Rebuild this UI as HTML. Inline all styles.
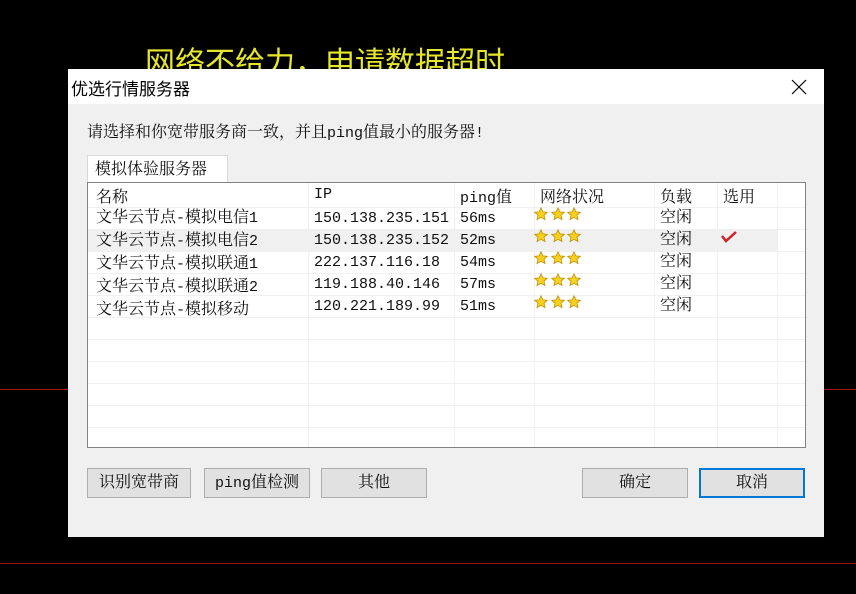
<!DOCTYPE html>
<html><head><meta charset="utf-8"><style>
*{margin:0;padding:0;box-sizing:border-box}
body{width:856px;height:594px;background:#000;position:relative;overflow:hidden;font-family:"Liberation Mono","Noto Serif CJK SC",monospace;color:#111}
.abs{position:absolute}
.red{position:absolute;height:1px;background:#a01010}
.yt{left:145px;top:38px;font:30px "Liberation Sans","Noto Sans CJK SC",sans-serif;color:#e6e62a;white-space:nowrap}
.dlg{left:68px;top:69px;width:756px;height:468px;background:#f0f0f0}
.tb{left:0;top:0;width:756px;height:35px;background:#fff}
.title{left:3px;top:6px;font:17px "Liberation Sans","Noto Sans CJK SC",sans-serif;color:#000}
.t{font-size:16px;white-space:nowrap}
.l{font-size:15px}
.btn{position:absolute;top:399px;height:30px;background:#e1e1e1;border:1px solid #adadad;text-align:center;line-height:28px;font-size:16px;white-space:nowrap}
</style></head><body>
<div class="red" style="left:0;top:389px;width:68px"></div>
<div class="red" style="left:824px;top:389px;width:32px"></div>
<div class="red" style="left:0;top:563px;width:856px"></div>
<div class="abs yt">网络不给力，申请数据超时</div>
<div class="abs dlg">
 <div class="abs tb"></div>
 <div class="abs title">优选行情服务器</div>
 <svg class="abs" style="left:723px;top:10px" width="16" height="16"><path d="M1 1L15 15M15 1L1 15" stroke="#000" stroke-width="1.2"/></svg>
 <div class="abs t" style="left:19px;top:50px">请选择和你宽带服务商一致，并且<span class="l">ping</span>值最小的服务器<span class="l">!</span></div>
 <div class="abs" style="left:19px;top:86px;width:141px;height:28px;background:#fff;border:1px solid #d9d9d9;border-bottom:none"></div>
 <div class="abs t" style="left:27px;top:87px">模拟体验服务器</div>
 <div class="abs" style="left:19px;top:113px;width:719px;height:266px;background:#fff;border:1px solid #828282">
  <svg class="abs" style="left:0;top:0" width="717" height="264">
   <rect x="0" y="47" width="689" height="22" fill="#f0f0f0"/>
   <g stroke="#f0f0f0" stroke-width="1">
    <line x1="220.5" y1="0" x2="220.5" y2="264"/><line x1="366.5" y1="0" x2="366.5" y2="264"/>
    <line x1="446.5" y1="0" x2="446.5" y2="264"/><line x1="566.5" y1="0" x2="566.5" y2="264"/>
    <line x1="629.5" y1="0" x2="629.5" y2="264"/><line x1="689.5" y1="0" x2="689.5" y2="264"/>
    <line x1="0" y1="24.5" x2="717" y2="24.5"/><line x1="0" y1="46.5" x2="717" y2="46.5"/>
    <line x1="0" y1="68.5" x2="717" y2="68.5"/><line x1="0" y1="90.5" x2="717" y2="90.5"/>
    <line x1="0" y1="112.5" x2="717" y2="112.5"/><line x1="0" y1="134.5" x2="717" y2="134.5"/>
    <line x1="0" y1="156.5" x2="717" y2="156.5"/><line x1="0" y1="178.5" x2="717" y2="178.5"/>
    <line x1="0" y1="200.5" x2="717" y2="200.5"/><line x1="0" y1="222.5" x2="717" y2="222.5"/>
    <line x1="0" y1="244.5" x2="717" y2="244.5"/>
   </g>
   <path d="M634 53L638 58L648 49" stroke="#d0202a" stroke-width="2.5" fill="none"/>
   <defs><path id="s" d="M7 0.8L8.9 4.9L13.3 5.3L10 8.2L11 12.6L7 10.3L3 12.6L4 8.2L0.7 5.3L5.1 4.9Z" fill="#f8d020" stroke="#c09000" stroke-width="0.8"/></defs>
   <g id="st"><use href="#s" x="446" y="24"/><use href="#s" x="463" y="24"/><use href="#s" x="479" y="24"/></g>
   <use href="#st" y="22"/><use href="#st" y="44"/><use href="#st" y="66"/><use href="#st" y="88"/>
  </svg>
  <div class="abs t" style="left:8px;top:1px">名称</div>
  <div class="abs t l" style="left:226px;top:3px">IP</div>
  <div class="abs t" style="left:372px;top:1px"><span class="l">ping</span>值</div>
  <div class="abs t" style="left:452px;top:1px">网络状况</div>
  <div class="abs t" style="left:572px;top:1px">负载</div>
  <div class="abs t" style="left:635px;top:1px">选用</div>
  <div class="abs t" style="left:8px;top:24px;line-height:22px">文华云节点<span class="l">-</span>模拟电信<span class="l">1</span><br>文华云节点<span class="l">-</span>模拟电信<span class="l">2</span><br>文华云节点<span class="l">-</span>模拟联通<span class="l">1</span><br>文华云节点<span class="l">-</span>模拟联通<span class="l">2</span><br>文华云节点<span class="l">-</span>模拟移动</div>
  <div class="abs t l" style="left:226px;top:25px;line-height:22px">150.138.235.151<br>150.138.235.152<br>222.137.116.18<br>119.188.40.146<br>120.221.189.99</div>
  <div class="abs t l" style="left:372px;top:25px;line-height:22px">56ms<br>52ms<br>54ms<br>57ms<br>51ms</div>
  <div class="abs t" style="left:572px;top:24px;line-height:22px">空闲<br>空闲<br>空闲<br>空闲<br>空闲</div>
 </div>
 <div class="btn" style="left:19px;width:104px">识别宽带商</div>
 <div class="btn" style="left:136px;width:106px"><span class="l">ping</span>值检测</div>
 <div class="btn" style="left:253px;width:106px">其他</div>
 <div class="btn" style="left:514px;width:106px">确定</div>
 <div class="btn" style="left:631px;width:106px;border:2px solid #0078d7;line-height:26px">取消</div>
</div>
</body></html>
